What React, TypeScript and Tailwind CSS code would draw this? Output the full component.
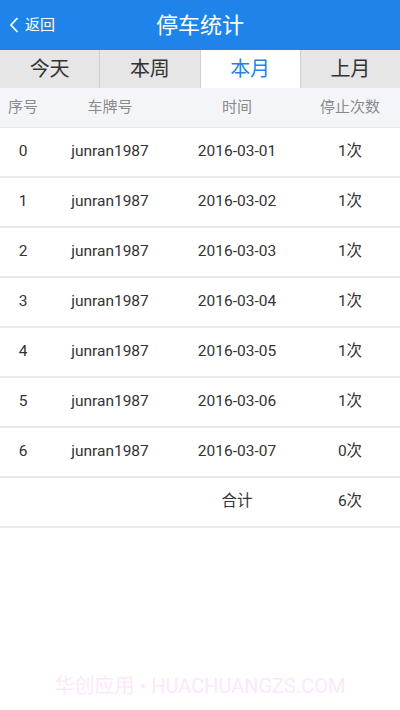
import { useState } from 'react';

const tabs = ['今天', '本周', '本月', '上月'];

const records = [
  { id: 0, plate: 'junran1987', date: '2016-03-01', count: 1 },
  { id: 1, plate: 'junran1987', date: '2016-03-02', count: 1 },
  { id: 2, plate: 'junran1987', date: '2016-03-03', count: 1 },
  { id: 3, plate: 'junran1987', date: '2016-03-04', count: 1 },
  { id: 4, plate: 'junran1987', date: '2016-03-05', count: 1 },
  { id: 5, plate: 'junran1987', date: '2016-03-06', count: 1 },
  { id: 6, plate: 'junran1987', date: '2016-03-07', count: 0 },
];

const font = { fontFamily: 'Roboto, "Noto Sans CJK SC", sans-serif' };

export default function App() {
  const [active, setActive] = useState(2);
  const total = records.reduce((sum, r) => sum + r.count, 0);

  return (
    <div className="w-[400px] h-[710px] bg-white flex flex-col relative overflow-hidden" style={font}>
      <header className="h-[50px] bg-[#1f84ea] flex items-center relative text-white">
        <button className="flex items-center gap-[6px] pl-[9px] text-[15px]">
          <svg width="10" height="16" viewBox="0 0 10 16" fill="none" stroke="white" strokeWidth="1.8">
            <path d="M8.5 1 L2 8 L8.5 15" />
          </svg>
          返回
        </button>
        <h1 className="absolute left-0 right-0 text-center text-[22px] pointer-events-none">停车统计</h1>
      </header>

      <nav className="h-[38px] flex bg-[#e6e6e6]">
        {tabs.map((t, i) => (
          <button
            key={t}
            onClick={() => setActive(i)}
            className={`flex-1 text-[20px] border-l border-[#cfcfcf] first:border-l-0 ${
              i === active ? 'bg-white text-[#1f84ea]' : 'text-[#333]'
            }`}
          >
            {t}
          </button>
        ))}
      </nav>

      <div className="h-[40px] flex items-center bg-[#f4f5f9] border-b border-[#e6e8ec] text-[15px] text-[#8a8a8a]">
        <span className="w-[46px] text-center">序号</span>
        <span className="w-[128px] text-center">车牌号</span>
        <span className="w-[126px] text-center">时间</span>
        <span className="flex-1 text-center">停止次数</span>
      </div>

      {records.map((r) => (
        <div key={r.id} className="h-[50px] flex items-center border-b-2 border-[#e8eaed] text-[15.5px] text-[#333]">
          <span className="w-[46px] text-center">{r.id}</span>
          <span className="w-[128px] text-center">{r.plate}</span>
          <span className="w-[126px] text-center">{r.date}</span>
          <span className="flex-1 text-center">{r.count}次</span>
        </div>
      ))}

      <div className="h-[50px] flex items-center border-b-2 border-[#e8eaed] text-[15.5px] text-[#333]">
        <span className="w-[46px]" />
        <span className="w-[128px]" />
        <span className="w-[126px] text-center">合计</span>
        <span className="flex-1 text-center">{total}次</span>
      </div>

      <p className="absolute left-0 right-0 bottom-[9px] text-center text-[20px] text-[#fce8fc]">
        华创应用 • HUACHUANGZS.COM
      </p>
    </div>
  );
}
